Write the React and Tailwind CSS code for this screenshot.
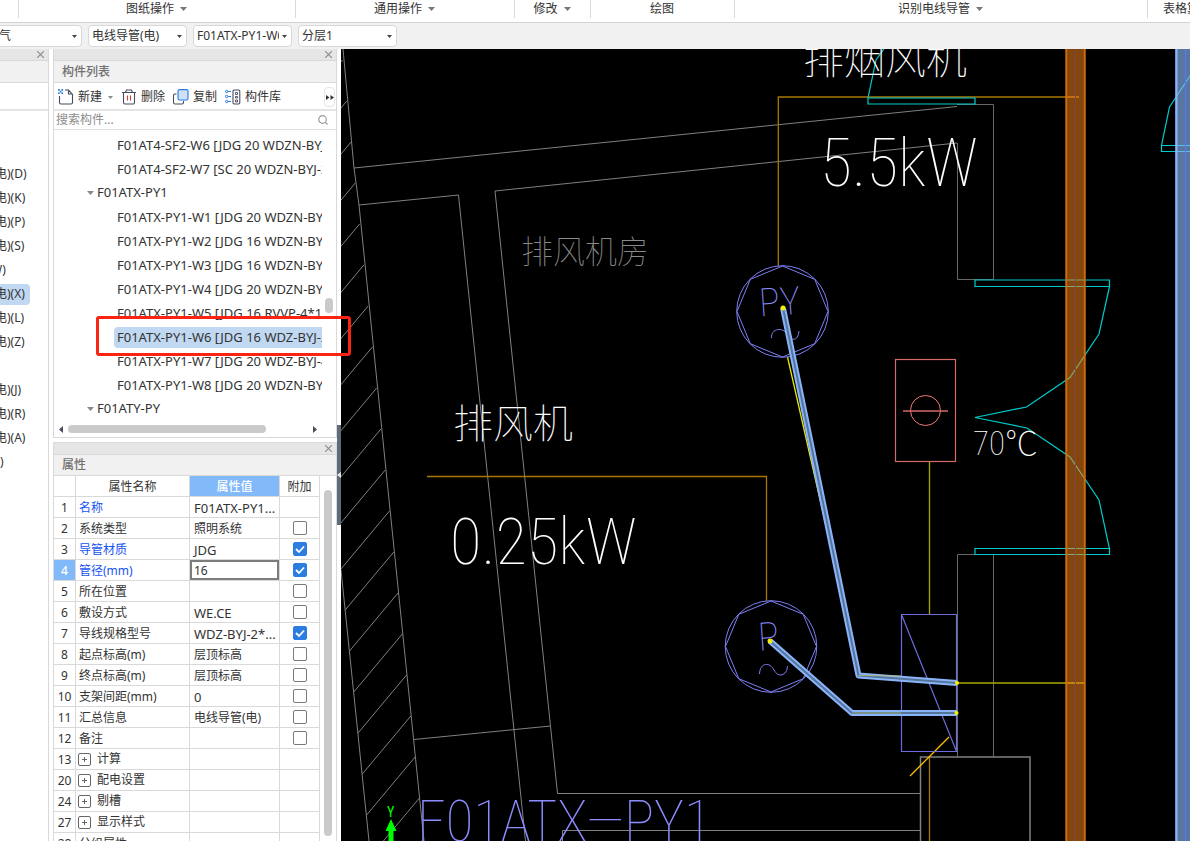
import React from 'react';

const ribbon = [
  { label: '图纸操作', menu: true },
  { label: '通用操作', menu: true },
  { label: '修改', menu: true },
  { label: '绘图', menu: false },
  { label: '识别电线导管', menu: true },
];

const categories = ['电)(D)', '电)(K)', '电)(P)', '电)(S)', 'W)', '电)(X)', '电)(L)', '电)(Z)', '', '电)(J)', '电)(R)', '电)(A)', ')'];

const tree = [
  { text: 'F01AT4-SF2-W6 [JDG 20 WDZN-BYJ-' },
  { text: 'F01AT4-SF2-W7 [SC 20 WDZN-BYJ-3' },
  { text: 'F01ATX-PY1', group: true },
  { text: 'F01ATX-PY1-W1 [JDG 20 WDZN-BYJ' },
  { text: 'F01ATX-PY1-W2 [JDG 16 WDZN-BYJ' },
  { text: 'F01ATX-PY1-W3 [JDG 16 WDZN-BYJ' },
  { text: 'F01ATX-PY1-W4 [JDG 20 WDZN-BYJ' },
  { text: 'F01ATX-PY1-W5 [JDG 16 RVVP-4*1.5' },
  { text: 'F01ATX-PY1-W6 [JDG 16 WDZ-BYJ-2', selected: true },
  { text: 'F01ATX-PY1-W7 [JDG 20 WDZ-BYJ-4' },
  { text: 'F01ATX-PY1-W8 [JDG 20 WDZN-BYJ' },
  { text: 'F01ATY-PY', group: true },
];

const properties = [
  { n: 1, name: '名称', value: 'F01ATX-PY1...', latin: true, key: true },
  { n: 2, name: '系统类型', value: '照明系统', check: false },
  { n: 3, name: '导管材质', value: 'JDG', latin: true, check: true, key: true },
  { n: 4, name: '管径(mm)', value: '16', check: true, key: true, editing: true },
  { n: 5, name: '所在位置', value: '', check: false },
  { n: 6, name: '敷设方式', value: 'WE.CE', latin: true, check: false },
  { n: 7, name: '导线规格型号', value: 'WDZ-BYJ-2*...', latin: true, check: true },
  { n: 8, name: '起点标高(m)', value: '层顶标高', check: false },
  { n: 9, name: '终点标高(m)', value: '层顶标高', check: false },
  { n: 10, name: '支架间距(mm)', value: '0', latin: true, check: false },
  { n: 11, name: '汇总信息', value: '电线导管(电)', check: false },
  { n: 12, name: '备注', value: '', check: false },
  { n: 13, name: '计算', group: true },
  { n: 20, name: '配电设置', group: true },
  { n: 24, name: '剔槽', group: true },
  { n: 27, name: '显示样式', group: true },
  { n: 28, name: '分组属性' },
];

function Caret({ className = '' }) {
  return (
    <svg viewBox="0 0 7 4" className={'h-1 w-[7px] shrink-0 ' + className} aria-hidden="true">
      <path d="M0 0h7L3.500 4z" fill="currentColor" />
    </svg>
  );
}

function Combo({ label, value, className = '' }) {
  return (
    <div className={'relative h-[22px] w-[99px] shrink-0 ' + className}>
      <select aria-label={label} className="h-full w-full appearance-none overflow-hidden rounded border border-[#d8d8d8] bg-white pr-3 pl-[3px] text-xs text-[#333]">
        <option>{value}</option>
      </select>
      <svg viewBox="0 0 5 3" className="pointer-events-none absolute top-[10px] right-[5px] h-[3px] w-[5px] text-[#444]" aria-hidden="true">
        <path d="M0 0h5L2.500 3z" fill="currentColor" />
      </svg>
    </div>
  );
}

function CloseStrip({ label }) {
  return (
    <div className="flex h-3 shrink-0 items-center justify-end border-b border-[#d9d9d9] bg-[#e6e6e6] pr-1">
      <button aria-label={label} className="text-[#8a8a8a]">
        <svg viewBox="0 0 7 7" className="h-[7px] w-[7px]"><path d="M0 0l7 7M7 0L0 7" stroke="currentColor" strokeWidth="1.1" /></svg>
      </button>
    </div>
  );
}

function NewIcon() {
  return (
    <svg viewBox="0 0 16 16" className="h-4 w-4 shrink-0" fill="none">
      <path d="M1.500 7v6.500a1.500 1.500 0 0 0 1.500 1.500h10a1.500 1.500 0 0 0 1.500-1.500V5.500L10.500 1H7M10.500 1v4h4" stroke="#454c5c" strokeWidth="1.100" />
      <path d="M0 0h1.700v1.700H0zM3.400 0h1.700v1.700H3.400zM1.700 1.700h1.700v1.700H1.700zM0 3.400h1.700v1.700H0zM3.400 3.400h1.700v1.700H3.400z" fill="#2a7be0" />
    </svg>
  );
}
function TrashIcon() {
  return (
    <svg viewBox="0 0 14 16" className="h-4 w-[14px] shrink-0" fill="none">
      <path d="M0 3.500h14M3.500 3.500L4.500 1h5l1 2.500M1.500 3.500v10a1.500 1.500 0 0 0 1.500 1.500h8a1.500 1.500 0 0 0 1.500-1.500v-10" stroke="#454c5c" strokeWidth="1.100" />
      <path d="M5.500 6.500v5M8.500 6.500v5" stroke="#d9363e" strokeWidth="1.100" />
    </svg>
  );
}
function CopyIcon() {
  return (
    <svg viewBox="0 0 16 16" className="h-4 w-4 shrink-0" fill="none">
      <path d="M3.500 5H2A1.500 1.500 0 0 0 .5 6.500v7A1.500 1.500 0 0 0 2 15h7a1.500 1.500 0 0 0 1.500-1.500V12" stroke="#454c5c" strokeWidth="1.100" />
      <rect x="5" y=".6" width="10" height="10.400" rx="1.500" fill="#cfe1fa" stroke="#2a7be0" strokeWidth="1.100" />
    </svg>
  );
}
function LibraryIcon() {
  return (
    <svg viewBox="0 0 16 16" className="h-4 w-4 shrink-0" fill="none">
      <g stroke="#2a7be0"><circle cx="1.700" cy="2.500" r="1.200" /><circle cx="1.700" cy="7.500" r="1.200" /><circle cx="1.700" cy="12.500" r="1.200" /><path d="M3 2.500h3M3 7.500h3M3 12.500h3" /></g>
      <rect x="8" y="1" width="6.800" height="14" rx="1.200" stroke="#454c5c" strokeWidth="1.100" />
      <path d="M10.500 3.500h2v2h-2zM10.500 7.500h2v1.500h-2zM10.500 11h2v2h-2z" stroke="#454c5c" strokeWidth=".9" />
    </svg>
  );
}

function ComponentList() {
  return (
    <section className="flex shrink-0 flex-col border-x border-b border-[#d9d9d9] bg-white">
      <CloseStrip label="关闭构件列表" />
      <h2 className="flex h-[22px] items-center border-b border-[#d9d9d9] bg-[#f1f1f1] pl-2 text-xs font-medium text-[#707070]">构件列表</h2>
      <div className="flex h-7 items-center border-b-2 border-[#e4e4e4] pt-[2px] pl-1 text-xs text-[#333]">
        <button className="flex items-center gap-1"><NewIcon />新建</button>
        <button aria-label="新建选项" className="ml-[6px] flex h-4 items-center text-[#888]"><svg viewBox="0 0 5 3" className="h-[3px] w-[5px]"><path d="M0 0h5L2.500 3z" fill="currentColor" /></svg></button>
        <button className="ml-[9px] flex items-center gap-[5px]"><TrashIcon />删除</button>
        <button className="ml-2 flex items-center gap-1"><CopyIcon />复制</button>
        <button className="ml-2 flex items-center gap-1"><LibraryIcon />构件库</button>
        <button aria-label="更多" className="mr-px ml-auto flex h-5 w-[11px] items-center justify-center rounded border border-[#e6e6e6]">
          <svg viewBox="0 0 8 5" className="h-[5px] w-2 shrink-0"><path d="M0 0l3.500 2.500L0 5zM4.500 0L8 2.500 4.500 5z" fill="#333" /></svg>
        </button>
      </div>
      <div className="flex h-[19px] items-center border-b border-[#e0e0e0] pr-2 pl-[2px]">
        <input aria-label="搜索构件" placeholder="搜索构件..." className="min-w-0 flex-1 text-xs outline-none placeholder:text-[#8c8c8c]" />
        <svg viewBox="0 0 10 10" className="h-[10px] w-[10px]" fill="none" stroke="#999" strokeWidth="1.200"><circle cx="4.500" cy="4.500" r="3.800" /><path d="M7.300 7.300L9.500 9.500" /></svg>
      </div>
      <div className="flex">
        <ul className="min-w-0 flex-1 pt-[3px] text-[13px] text-[#333]">
          {tree.map((row) => row.group ? (
            <li key={row.text} className="flex h-6 items-center pl-[33px]">
              <button className="flex items-center gap-[3px]"><Caret className="text-[#888]" />{row.text}</button>
            </li>
          ) : (
            <li key={row.text} className="flex h-6 items-center pl-[60px]">
              <span className={'h-[21px] w-full overflow-hidden rounded-l pl-[3px] leading-5 whitespace-nowrap ' + (row.selected ? 'bg-[#c0d8f1]' : '')}>{row.text}</span>
            </li>
          ))}
        </ul>
        <div className="flex w-[14px] flex-col items-center"><div className="mt-[168px] h-[15px] w-2 rounded-full bg-[#cacaca]" /></div>
      </div>
      <div className="flex h-4 items-center pr-[19px] pl-[5px]">
        <svg viewBox="0 0 4 7" className="h-[7px] w-1"><path d="M4 0v7L0 3.500z" fill="#454c5c" /></svg>
        <div className="ml-[5px] h-2 w-[198px] rounded-full bg-[#cacaca]" />
        <svg viewBox="0 0 4 7" className="ml-auto h-[7px] w-1"><path d="M0 0v7l4-3.500z" fill="#454c5c" /></svg>
      </div>
    </section>
  );
}

function Tick({ name, checked }) {
  return (
    <label className="relative mx-auto block h-[14px] w-[14px]">
      <input type="checkbox" aria-label={name + ' 附加'} defaultChecked={checked} className="peer block h-[14px] w-[14px] appearance-none rounded-[2px] border border-[#7a7a7a] bg-white checked:border-[#2b7de0] checked:bg-[#2b7de0]" />
      <svg viewBox="0 0 14 14" className="pointer-events-none absolute inset-0 hidden peer-checked:block" fill="none"><path d="M3 7l3 3 5-5.500" stroke="#fff" strokeWidth="1.800" /></svg>
    </label>
  );
}

function Properties() {
  const box = 'h-[21px] border-r border-b border-[#d9d9d9] p-0 ';
  const cell = 'h-[21px] border-r border-b border-[#d9d9d9] pt-[2px] pb-0 ';
  return (
    <section className="flex min-h-0 flex-1 flex-col overflow-hidden border-x border-t border-[#d9d9d9] bg-white">
      <CloseStrip label="关闭属性" />
      <h2 className="flex h-[21px] shrink-0 items-center border-b border-[#d9d9d9] bg-[#f1f1f1] pl-2 text-xs font-medium text-[#707070]">属性</h2>
      <div className="flex min-h-0 flex-1 overflow-hidden">
        <div className="min-w-0 flex-1">
          <table className="w-full table-fixed border-separate border-spacing-0 text-xs leading-4 text-[#333]">
            <colgroup><col className="w-[22px]" /><col /><col className="w-[90px]" /><col className="w-10" /></colgroup>
            <thead>
              <tr>
                <th className={box} />
                <th className={cell + 'px-0 font-normal'}>属性名称</th>
                <th className={cell + 'border-[#6aaaf5] bg-[#82b9f8] px-0 font-medium text-white'}>属性值</th>
                <th className={cell + 'px-0 font-normal'}>附加</th>
              </tr>
            </thead>
            <tbody>
              {properties.map((p) => (
                <tr key={p.n}>
                  <td className={cell + 'px-0 text-center ' + (p.editing ? 'bg-[#82b9f8] font-medium text-white' : '')}>{p.n}</td>
                  <td className={(p.group ? box + 'pl-[2px] ' : cell + 'pl-[3px] ') + 'pr-0 whitespace-nowrap ' + (p.key ? 'text-[#1554f0]' : '')}>
                    {p.group ? (
                      <button className="flex items-center gap-[6px]">
                        <svg viewBox="0 0 13 13" className="h-[13px] w-[13px] shrink-0" fill="none" stroke="#666"><rect x=".5" y=".5" width="12" height="12" rx="1.500" /><path d="M4 6.500h5M6.500 4v5" /></svg>
                        {p.name}
                      </button>
                    ) : p.name}
                  </td>
                  <td className={(p.editing ? box : cell + 'pr-0 pl-1 whitespace-nowrap ') + (p.latin ? 'text-[13px] leading-4' : '')}>
                    {p.editing
                      ? <input aria-label={p.name} defaultValue={p.value} className="block h-5 w-full border-2 border-[#7c7c7c] pl-[2px] outline-none" />
                      : p.value}
                  </td>
                  <td className={box}>{p.check !== undefined && <Tick name={p.name} checked={p.check} />}</td>
                </tr>
              ))}
            </tbody>
          </table>
        </div>
        <div className="flex w-4 shrink-0 justify-center pt-[14px] pb-[5px]"><div className="w-2 rounded-full bg-[#cacaca]" /></div>
      </div>
    </section>
  );
}

const octagon = (cx, cy, r) =>
  Array.from({ length: 8 }, (_, i) => {
    const a = (i * Math.PI) / 4;
    return (cx + r * Math.cos(a)).toFixed(1) + ',' + (cy + r * Math.sin(a)).toFixed(1);
  }).join(' ');

const hatches = Array.from({ length: 20 }, (_, i) => {
  const x = 342.500 + 4.270 * i;
  const y = 60 + 41 * i;
  return `M${x} ${y}l-48.500 58`;
}).join('');

function Drawing() {
  return (
    <svg viewBox="341 49 849 792" preserveAspectRatio="xMinYMin slice" className="block h-full w-full bg-black font-['Roboto_Condensed','Roboto','Noto_Sans_CJK_SC',sans-serif] font-thin" fill="none" role="img" aria-label="电气平面图">
      <defs><clipPath id="wall"><path d="M341 49h1.500L425 841h-56L341 570z" /></clipPath></defs>
      <g stroke="#808080">
        <path d={hatches} clipPath="url(#wall)" />
        <path d="M343 49L354 168L359 205L387 480L424 841M341 570L369 841" />
        <path d="M354 168L957 106.500M359 205L458.500 195L488 480L525.500 841M957 143L495 191L525 480L557.500 793.500H920M414 739.500L550.500 726" />
        <path d="M957.500 143V279.500H993.500V104.500H957M957.500 757V554.500H993.500V757" stroke="#686868" />
        <path d="M562.500 841V830.500H920" />
        <path d="M920.500 841V757H1030V841" strokeWidth="1.500" />
      </g>

      <g stroke="#a87800" strokeWidth="1.300">
        <path d="M1079 97H778.300V266M427 476.500H766.500V601M929.500 757V841" />
        <path d="M910 776L949 737" stroke="#ffc000" />
      </g>
      <g stroke="#a8a800" strokeWidth="1.300">
        <path d="M929.500 462V614M957 683H1085" />
        <path d="M787.500 357L827 530" stroke="#e8e800" />
      </g>

      <g stroke="#00cccc" strokeWidth="1.200">
        <path d="M884 49L876 60L868 98M868 98H975V104H868Z" />
        <path d="M975 280H1109.500V286.500H975ZM1109.500 286.500L1099 334L1070 377.500L1026.500 407L975 417.500L1027 428L1070 457L1099 500L1109.500 549M975 548.500H1109.500V554.500H975Z" />
        <path d="M1190 76L1169.500 107L1161.500 145.500H1191M1161.500 145.500V151.500H1191" />
      </g>

      <g stroke="#d46a6a">
        <rect x="895.500" y="359.500" width="60" height="102" strokeWidth="1.200" />
        <circle cx="925.500" cy="410.500" r="15" stroke="#ef7474" />
        <path d="M903 411H948" strokeWidth="1.500" />
      </g>

      <g stroke="#7f7ff5">
        <circle cx="782.500" cy="311.500" r="45.800" />
        <polygon points={octagon(782.5, 311.5, 45.5)} />
        <circle cx="771" cy="646.500" r="45.800" />
        <polygon points={octagon(771, 646.5, 45.5)} />
        <path d="M771.500 338C771 328 783 327 787 334S798 342 799 331M759.500 674C760 662 770 662 774 670S787 676 787.500 666" />
        <path d="M901.500 614.500H956.500V751.500H901.500ZM901.500 614.500L956.500 751.500" stroke="#6c6cdc" strokeWidth="1.200" />
      </g>

      <g fill="#8c8cff" stroke="none">
        <text x="759" y="315" fontSize="39" transform="rotate(-4 782 300)">PY</text>
        <text x="758" y="650" fontSize="39" transform="rotate(-4 771 636)">P</text>
        <text x="417" y="841" fontSize="57">F01ATX—PY1</text>
      </g>
      <g fill="#fff" stroke="none">
        <text x="803" y="74" fontSize="41">排烟风机</text>
        <text x="820" y="186" fontSize="66">5.5kW</text>
        <text x="453" y="438" fontSize="40">排风机</text>
        <text x="450" y="564" fontSize="65">0.25kW</text>
        <text x="973" y="455" fontSize="33">70℃</text>
      </g>
      <text x="521" y="263" fontSize="32" fill="#8a8a8a">排风机房</text>

      <g strokeLinejoin="round">
        <path d="M783 308L858.500 675.500L957 683M770 641L852 713H957" stroke="#8ab4fa" strokeWidth="6" />
        <path d="M783 308L858.500 675.500L957 683M770 641L852 713H957" stroke="#55749c" strokeWidth="2" />
        <path d="M852 713H901M858.500 675.500L901 676" stroke="#b4c060" strokeWidth=".8" />
      </g>
      <g fill="#f4f000"><circle cx="783" cy="308" r="2.500" /><circle cx="770" cy="641" r="2.500" /><circle cx="957" cy="683" r="2" /><circle cx="956.500" cy="713" r="2" /></g>

      <rect x="1065" y="49" width="21" height="792" fill="#ff8715" fillOpacity=".52" />
      <path d="M1066.500 49V841M1084.500 49V841" stroke="#cc6a12" strokeWidth="1.500" />
      <path d="M1075.500 49V841" stroke="#7b4560" />
      <rect x="1175" y="49" width="15" height="792" fill="#8ab8fb" fillOpacity=".64" />
      <path d="M1176.500 49V841" stroke="#8ab4ff" strokeWidth="2" />
      <path d="M1185.500 49V841" stroke="#5a78ec" strokeWidth="1.200" />

      <path d="M391 819L396.500 831H393.500V841H388.500V831H385.500Z" fill="#00ff00" />
      <text x="387" y="817" fontSize="14" fill="#00ff00" className="font-normal">Y</text>
    </svg>
  );
}

export default function App() {
  return (
    <div className="relative flex h-screen flex-col overflow-hidden bg-white font-['Noto_Sans','Noto_Sans_CJK_SC',sans-serif] text-xs text-[#333]">
      <nav className="grid h-[23px] shrink-0 grid-cols-[19fr_277fr_219fr_76fr_144fr_413fr_42fr] overflow-hidden border-b border-[#d4d4d4] bg-white">
        <div className="mb-1 border-r border-[#d9d9d9]" />
        {ribbon.map((g) => (
          <div key={g.label} className="mb-1 flex min-w-0 items-center justify-center border-r border-[#d9d9d9] pr-px">
            <button className="flex items-center gap-[6px] whitespace-nowrap">{g.label}{g.menu && <Caret className="text-[#777]" />}</button>
          </div>
        ))}
        <button className="mb-1 min-w-0 overflow-hidden pl-[15px] text-left whitespace-nowrap">表格算</button>
      </nav>

      <div className="flex h-[26px] shrink-0 items-center gap-[6px] bg-[#f1f1f1]">
        <Combo label="专业" value="电气" className="-ml-[17px]" />
        <Combo label="构件类型" value="电线导管(电)" />
        <Combo label="构件" value="F01ATX-PY1-W6" />
        <Combo label="分层" value="分层1" />
      </div>

      <main className="flex min-h-0 flex-1">
        <aside className="mr-1 flex w-[49px] shrink-0 flex-col overflow-hidden border-r border-[#d9d9d9]">
          <CloseStrip label="关闭导航" />
          <div className="h-[22px] border-b border-[#d9d9d9] bg-[#f1f1f1]" />
          <div className="h-7 border-b-2 border-[#e4e4e4]" />
          <ul className="mt-[51px]">
            {categories.map((c, i) => (
              <li key={i} className="flex h-6 items-center">
                <span className={'flex h-[21px] items-center whitespace-nowrap ' + (c.startsWith('电') ? '-ml-[5px] ' : c.startsWith('W') ? '-ml-[9px] ' : '') + (c === '电)(X)' ? 'rounded-r bg-[#c0d8f1] pr-[5px]' : '')}>{c}</span>
              </li>
            ))}
          </ul>
        </aside>

        <div className="flex w-[284px] shrink-0 flex-col gap-1">
          <ComponentList />
          <Properties />
        </div>

        <div className="w-1 shrink-0 pt-[376px]">
          <button aria-label="折叠面板" className="flex h-[100px] w-1 items-center bg-[#5f6b78]">
            <svg viewBox="0 0 4 6" className="h-[6px] w-1"><path d="M4 0v6L0 3z" fill="#e8e8e8" /></svg>
          </button>
        </div>

        <div className="min-w-0 flex-1 overflow-hidden"><Drawing /></div>
      </main>

      <div className="pointer-events-none absolute top-[316px] left-[96px] h-10 w-[255px] rounded-[3px] border-3 border-[#fb2412]" />
    </div>
  );
}
